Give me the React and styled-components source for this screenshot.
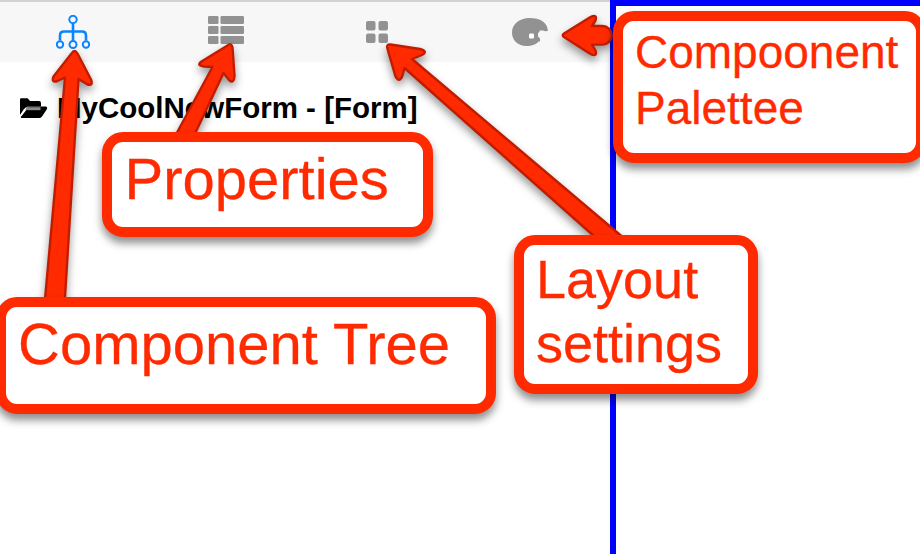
import React from 'react';
import styled, { createGlobalStyle } from 'styled-components';

const GlobalStyle = createGlobalStyle`
  body { margin: 0; background: #fff; overflow: hidden; }
  * { box-sizing: border-box; }
`;

const Screen = styled.main`
  position: relative;
  display: flex;
  width: 920px;
  height: 554px;
  overflow: hidden;
  font-family: "Liberation Sans", Arial, sans-serif;
`;

const Sidebar = styled.aside`
  width: 610px;
  display: flex;
  flex-direction: column;
`;

const Toolbar = styled.nav`
  display: grid;
  grid-template-columns: 146px 160px 142px 162px;
  height: 62px;
  padding-bottom: 4px;
  border-top: 2px solid #d2d2d2;
  background: #f7f7f7;
`;

const Tab = styled.button`
  display: flex;
  align-items: center;
  justify-content: center;
  padding: ${(p) => p.$drop || 0}px 0 0;
  border: 0;
  background: none;
  color: ${(p) => (p.$active ? '#0a84ff' : '#929292')};
  svg { display: block; }
`;

const TreeRow = styled.div`
  display: flex;
  align-items: center;
  height: 40px;
  margin-top: 26px;
  padding-left: 20px;
  gap: 9px;
  color: #000;
`;

const NodeName = styled.span`
  font-size: 29.5px;
  line-height: 40px;
  font-weight: 700;
  white-space: pre;
`;

const Preview = styled.section`
  flex: 1;
  border-top: 6px solid #0000ff;
  border-left: 6px solid #0000ff;
  background: #fff;
`;

const Arrows = styled.svg`
  position: absolute;
  inset: 0;
  filter: drop-shadow(0 5px 4px rgba(0, 0, 0, 0.4));
  path {
    fill: #ff2a00;
    stroke: #c21c00;
    stroke-width: 2.4;
    stroke-linejoin: round;
  }
`;

const Callout = styled.div`
  position: absolute;
  left: ${(p) => p.$x}px;
  top: ${(p) => p.$y}px;
  width: ${(p) => p.$w}px;
  height: ${(p) => p.$h}px;
  padding: ${(p) => p.$pad};
  border: 10px solid #ff2a00;
  border-radius: 21px;
  background: #fff;
  box-shadow: 0 6px 8px rgba(0, 0, 0, 0.45);
  color: #ff2a00;
  font-size: ${(p) => p.$size}px;
  line-height: ${(p) => p.$line}px;
  -webkit-text-stroke: 0.3px #ff2a00;
  white-space: pre-line;
`;

const TreeIcon = () => (
  <svg width="34" height="34" viewBox="0 0 34 34" fill="none" stroke="currentColor">
    <path d="M17 8.500v17M4 25.500v-5q0-4 4-4h18q4 0 4 4v5" strokeWidth="2.6" />
    <g strokeWidth="2">
      <circle cx="17" cy="4.500" r="3.700" fill="#f7f7f7" />
      <circle cx="4" cy="29.500" r="3.200" />
      <circle cx="17" cy="29.500" r="3.500" />
      <circle cx="30" cy="29.500" r="3.200" />
    </g>
  </svg>
);

const ListIcon = () => (
  <svg width="36" height="28" viewBox="0 0 36 28" fill="currentColor">
    {[0, 10, 20].map((y) => (
      <g key={y}>
        <rect y={y} width="10.5" height="8" rx="1.3" />
        <rect x="12.5" y={y} width="23.5" height="8" rx="1.3" />
      </g>
    ))}
  </svg>
);

const GridIcon = () => (
  <svg width="22" height="22" viewBox="0 0 22 22" fill="currentColor">
    <rect width="9.5" height="9.5" rx="2" />
    <rect x="12.5" width="9.5" height="9.5" rx="2" />
    <rect y="12.5" width="9.5" height="9.5" rx="2" />
    <rect x="12.5" y="12.5" width="9.5" height="9.5" rx="2" />
  </svg>
);

const PaletteIcon = () => (
  <svg width="38" height="28" viewBox="-2 0 38 28">
    <path
      d="M17.500 0C7 0 0 6.500 0 14.500C0 22.500 6 28 14.500 28C20 28 25 26 26.500 23.500H28V20.500L26 18.500V15.500L28 12.500H31Q33 13.500 35.800 13C36 4.500 28 0 17.500 0Z"
      fill="currentColor"
    />
    <rect x="17" y="15.500" width="5" height="5" rx="1.200" fill="#fff" />
  </svg>
);

const FolderIcon = () => (
  <svg width="28" height="21" viewBox="0 0 28 21">
    <path d="M0 17V1.500Q0 .3 1.200 .3H7Q8 .3 8.500 1.300L10 3H19Q21 3 21 5V8.500H8Q5.500 9 4 11Z" />
    <path d="M8.500 8.500H26Q28 9.300 26.700 11.500L22 18.500Q21 20 19 20H2Q0 20 1.400 18L5.500 12Q7 9 8.500 8.500Z" />
    <path d="M1 17.500L5.500 12" stroke="#fff" strokeWidth="1.300" />
    <path d="M6 10.700H20.500" stroke="#8c8c8c" strokeWidth="3" />
  </svg>
);

const tabs = [
  { name: 'Component tree', Icon: TreeIcon, active: true, drop: 3 },
  { name: 'Properties', Icon: ListIcon },
  { name: 'Layout settings', Icon: GridIcon, drop: 3 },
  { name: 'Component palette', Icon: PaletteIcon, drop: 4 },
];

export default function App() {
  return (
    <>
      <GlobalStyle />
      <Screen>
        <Sidebar>
          <Toolbar>
            {tabs.map(({ name, Icon, active, drop }) => (
              <Tab key={name} aria-label={name} $active={active} $drop={drop}>
                <Icon />
              </Tab>
            ))}
          </Toolbar>
          <TreeRow>
            <FolderIcon />
            <NodeName>MyCoolNewForm - [Form]</NodeName>
          </TreeRow>
        </Sidebar>
        <Preview />
        <Arrows width="920" height="554" viewBox="0 0 920 554">
          <path d="M71.500 53.500Q74.500 48.500 77.500 53.500L91 79.500Q93.500 86 87.500 84.500L78.500 79L64.500 305H44.500L65 77.500L57.500 81Q51 83 53.500 76.500Z" />
          <path d="M227.500 45.500Q231.500 42 232.500 47.500L234.500 75.500Q234 84 229.500 80.500L223.500 73L192 140H173L212.500 67L204 66.500Q196 65.500 201.500 61.500Z" />
          <path d="M390.500 44.500L420 49Q428.500 51.500 422 55L412 59L632 245H604L404.500 68L402.500 75.500Q399.500 83.500 395.500 76.500L387.500 49Q386 44 390.500 44.500Z" />
          <path d="M564 33.500L590.500 17Q597.500 13.500 595.500 20.500L592 26H602.500A9.300 9.300 0 0 1 602.500 44.600H592L595.500 50.500Q597.500 57.500 590.500 54L564 37Q561.500 35 564 33.500Z" />
        </Arrows>
        <Callout $x={102} $y={131.5} $w={331} $h={105.5} $pad="4.500px 12.500px" $size={58} $line={66}>Properties</Callout>
        <Callout $x={-4} $y={296.5} $w={500} $h={117} $pad="4.500px 12px" $size={58} $line={66}>Component Tree</Callout>
        <Callout $x={513.5} $y={235} $w={244.5} $h={158.5} $pad="2.300px 12.500px" $size={54} $line={64}>{'Layout\nsettings'}</Callout>
        <Callout $x={612.5} $y={11} $w={313} $h={152} $pad="3px 12.500px" $size={46} $line={56}>{'Compoonent\nPalettee'}</Callout>
      </Screen>
    </>
  );
}
